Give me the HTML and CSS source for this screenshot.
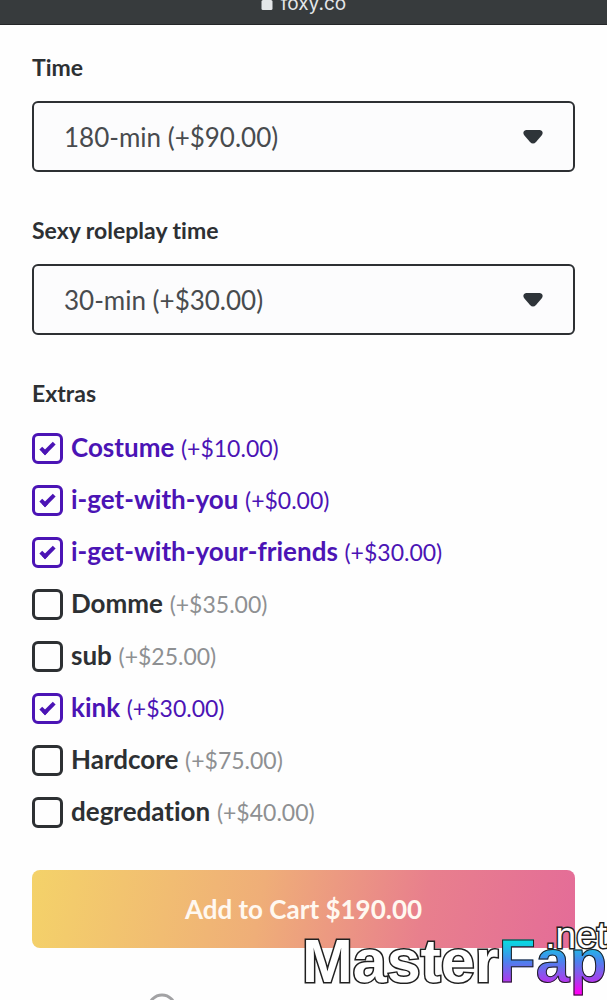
FILE: index.html
```html
<!DOCTYPE html>
<html lang="en">
<head>
<meta charset="utf-8">
<meta name="viewport" content="width=device-width, initial-scale=1">
<title>foxy.co</title>
<link rel="stylesheet" href="styles.css">
</head>
<body>
<header class="address-bar">
  <svg class="lock" viewBox="0 0 12 18" aria-hidden="true"><path d="M3 9V5a3 3 0 0 1 6 0v4" fill="none" stroke="currentColor" stroke-width="2"/><rect x="0.500" y="8" width="11" height="10" rx="1.500" fill="currentColor"/></svg>
  <span>foxy.co</span>
</header>
<main>
  <form class="options">
    <div class="field">
      <label class="field-label" for="time">Time</label>
      <div class="select-box">
        <select id="time"><option>180-min (+$90.00)</option></select>
        <svg class="caret" viewBox="0 0 20 14" aria-hidden="true"><path d="M3 0h14q4 1 2 5l-6 7q-3 3-6 0L1 5Q-1 1 3 0z" fill="currentColor"/></svg>
      </div>
    </div>
    <div class="field">
      <label class="field-label" for="roleplay">Sexy roleplay time</label>
      <div class="select-box">
        <select id="roleplay"><option>30-min (+$30.00)</option></select>
        <svg class="caret" viewBox="0 0 20 14" aria-hidden="true"><path d="M3 0h14q4 1 2 5l-6 7q-3 3-6 0L1 5Q-1 1 3 0z" fill="currentColor"/></svg>
      </div>
    </div>
    <fieldset class="extras">
      <legend class="field-label">Extras</legend>
      <div class="extras-list">
        <label class="extra"><input type="checkbox" checked><span><b>Costume</b> <span class="price">(+$10.00)</span></span></label>
        <label class="extra"><input type="checkbox" checked><span><b>i-get-with-you</b> <span class="price">(+$0.00)</span></span></label>
        <label class="extra"><input type="checkbox" checked><span><b>i-get-with-your-friends</b> <span class="price">(+$30.00)</span></span></label>
        <label class="extra"><input type="checkbox"><span><b>Domme</b> <span class="price">(+$35.00)</span></span></label>
        <label class="extra"><input type="checkbox"><span><b>sub</b> <span class="price">(+$25.00)</span></span></label>
        <label class="extra"><input type="checkbox" checked><span><b>kink</b> <span class="price">(+$30.00)</span></span></label>
        <label class="extra"><input type="checkbox"><span><b>Hardcore</b> <span class="price">(+$75.00)</span></span></label>
        <label class="extra"><input type="checkbox"><span><b>degredation</b> <span class="price">(+$40.00)</span></span></label>
      </div>
    </fieldset>
    <button class="add" type="button">Add to Cart $190.00</button>
  </form>
</main>
<div class="hint" aria-hidden="true"><svg class="ring" viewBox="0 0 30 30"><circle cx="15" cy="15" r="13" fill="none" stroke="currentColor" stroke-width="3"/></svg></div>
<div class="watermark"><span class="master">Master</span><span class="fap">Fap</span><span class="net">.net</span></div>
</body>
</html>
```
FILE: styles.css
```css
* { box-sizing: border-box; }
html, body { height: 100%; }
body {
  margin: 0;
  background: #fefefe;
  color: #2d3033;
  font-family: Lato, "Liberation Sans", sans-serif;
  font-variant-ligatures: none;
  position: relative;
  overflow: hidden;
}
.address-bar {
  display: flex;
  justify-content: center;
  align-items: flex-start;
  gap: 8px;
  height: 25px;
  border-bottom: 1px solid #242628;
  background: #373b3d;
  color: #e4e7e9;
  font: 19px/8px Inter, sans-serif;
  overflow: hidden;
}
.lock { width: 12px; height: 18px; margin-top: -8px; }
.options { padding: 26px 32px 0; }
.field { margin-bottom: 42px; }
.field-label {
  display: block;
  padding: 0;
  font-size: 23px;
  line-height: 32px;
  font-weight: 700;
}
.select-box {
  display: grid;
  align-items: center;
  margin-top: 18px;
}
.select-box > * { grid-area: 1 / 1; }
select {
  appearance: none;
  width: 100%;
  height: 71px;
  padding: 0 60px 0 30px;
  border: 2px solid #2d3033;
  border-radius: 6px;
  background: #fcfcfd;
  color: #484b4e;
  font: 26px/32px Lato, sans-serif;
}
.caret {
  width: 20px;
  height: 14px;
  margin-right: 32px;
  justify-self: end;
  color: #2e3439;
  pointer-events: none;
}
.extras { margin: 0; padding: 0; border: 0; }
.extras-list {
  display: grid;
  gap: 21px;
  padding-top: 24px;
}
.extra {
  display: flex;
  align-items: center;
  gap: 8px;
  font-size: 26px;
  line-height: 32px;
}
.extra > span { margin-top: -3px; }
.extra b { font-weight: 700; }
.price { font-size: 23px; color: #8e9092; }
.extra input {
  appearance: none;
  display: grid;
  place-items: center;
  flex: none;
  width: 31px;
  height: 31px;
  margin: 0;
  border: 3px solid #2d3033;
  border-radius: 6px;
}
.extra:has(:checked), .extra:has(:checked) .price { color: #4b14b5; }
.extra input:checked { border-color: #4b14b5; }
.extra input:checked::before {
  content: "";
  width: 11px;
  height: 4px;
  margin-top: -4px;
  border: solid #4b14b5;
  border-width: 0 0 4px 4px;
  transform: rotate(-45deg);
}
.add {
  display: block;
  width: 100%;
  height: 78px;
  margin-top: 42px;
  border: 0;
  border-radius: 8px;
  background: linear-gradient(100deg, #f4d269, #efae78 42%, #e87f8d 72%, #e46c98);
  color: #fff8f0;
  font: 700 26px/32px Lato, sans-serif;
}
.hint { padding: 45px 0 0 147px; color: #a2a2a4; }
.ring { display: block; width: 30px; height: 30px; }
.watermark {
  position: absolute;
  right: 0;
  bottom: -1px;
  display: flex;
  font: 700 61px/80px "Liberation Sans", sans-serif;
}
.master {
  color: #fff;
  -webkit-text-stroke: 3px #202020;
  paint-order: stroke fill;
}
.fap {
  background: linear-gradient(#00e5df 22%, #4a83ee 50%, #a044ed 72%, #ff00f5 90%);
  -webkit-background-clip: text;
  background-clip: text;
  color: transparent;
  -webkit-text-stroke: 1px #202020;
}
.net {
  position: absolute;
  right: 0;
  top: -1px;
  color: #fff;
  font: 400 37px/32px "Liberation Sans", sans-serif;
  -webkit-text-stroke: 3px #202020;
  paint-order: stroke fill;
}
```
